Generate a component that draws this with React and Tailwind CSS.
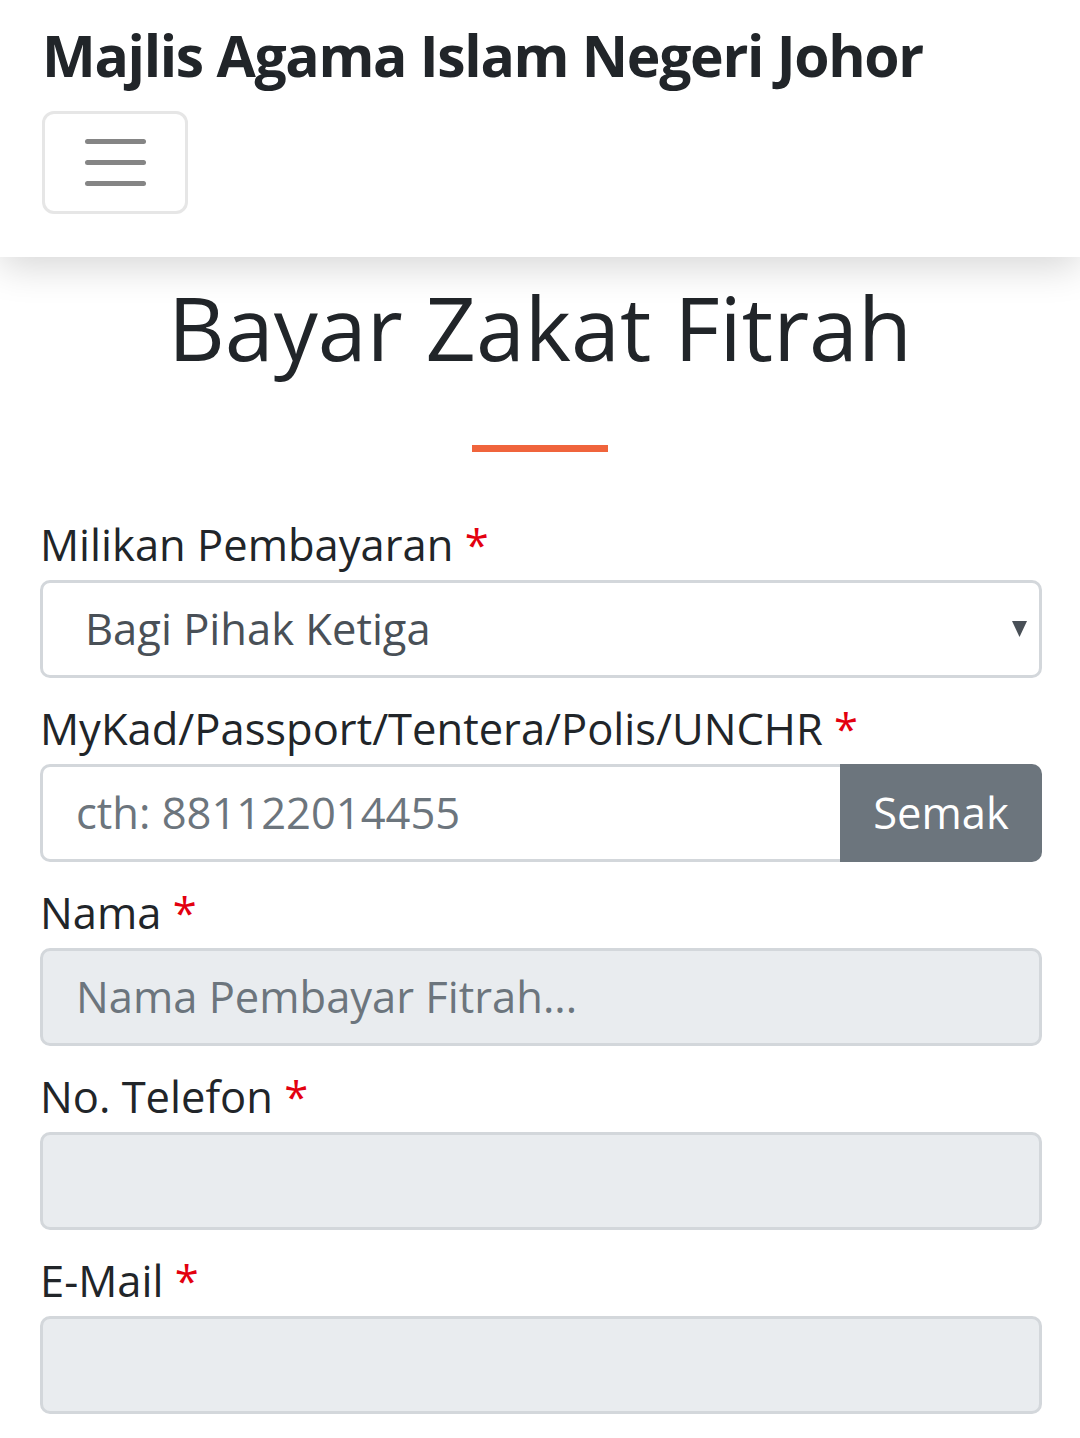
function Label({ children }) {
  return (
    <label className="block text-[43.5px] leading-[66px] text-[#212529] mb-[2px]">
      {children} <span className="text-[#e3000f]">*</span>
    </label>
  )
}

export default function App() {
  return (
    <div className="min-h-[1438px] bg-white" style={{ fontFamily: '"Open Sans", "Noto Sans", sans-serif' }}>
      {/* Navbar */}
      <nav className="relative z-10 bg-white px-[42px] pt-[10px] pb-[43px] shadow-[0_10px_36px_rgba(0,0,0,0.16)]">
        <div className="text-[57px] leading-[90px] font-bold tracking-[-1.3px] text-[#212529]">Majlis Agama Islam Negeri Johor</div>
        <button className="mt-[11px] w-[146px] h-[103px] border-[3px] border-[#e6e6e6] rounded-[12px] flex flex-col items-center justify-center gap-[16px]">
          <span className="block w-[61px] h-[5px] rounded-full bg-[#858585]"></span>
          <span className="block w-[61px] h-[5px] rounded-full bg-[#858585]"></span>
          <span className="block w-[61px] h-[5px] rounded-full bg-[#858585]"></span>
        </button>
      </nav>

      {/* Heading */}
      <div className="pt-[16px] flex flex-col items-center">
        <h1 className="text-[88px] leading-[108px] text-[#212529]">Bayar Zakat Fitrah</h1>
        <div className="mt-[64px] w-[136px] h-[7px] bg-[#f0643c]"></div>
      </div>

      {/* Form */}
      <form className="pl-[40px] pr-[38px] pt-[60px] flex flex-col gap-[18px]">
        <div>
          <Label>Milikan Pembayaran</Label>
          <div className="relative h-[98px] border-[3px] border-[#d3d7db] rounded-[10px] flex items-center pl-[42px]">
            <span className="text-[43.5px] text-[#495057]">Bagi Pihak Ketiga</span>
            <svg className="absolute right-[12px] top-[38px] w-[15px] h-[16px]" viewBox="0 0 15 16">
              <path d="M0 0 L15 0 L7.5 16 Z" fill="#495057" />
            </svg>
          </div>
        </div>

        <div>
          <Label>MyKad/Passport/Tentera/Polis/UNCHR</Label>
          <div className="flex h-[98px]">
            <div className="flex-1 border-[3px] border-r-0 border-[#d3d7db] rounded-l-[10px] flex items-center pl-[33px]">
              <span className="text-[43.5px] text-[#6c757d]">cth: 881122014455</span>
            </div>
            <div className="w-[202px] bg-[#6c757d] rounded-r-[10px] flex items-center justify-center">
              <span className="text-[43.5px] text-white">Semak</span>
            </div>
          </div>
        </div>

        <div>
          <Label>Nama</Label>
          <div className="h-[98px] bg-[#e9ecef] border-[3px] border-[#d3d7db] rounded-[10px] flex items-center pl-[33px]">
            <span className="text-[43.5px] text-[#6c757d]">Nama Pembayar Fitrah...</span>
          </div>
        </div>

        <div>
          <Label>No. Telefon</Label>
          <div className="h-[98px] bg-[#e9ecef] border-[3px] border-[#d3d7db] rounded-[10px]"></div>
        </div>

        <div>
          <Label>E-Mail</Label>
          <div className="h-[98px] bg-[#e9ecef] border-[3px] border-[#d3d7db] rounded-[10px]"></div>
        </div>
      </form>
    </div>
  )
}
